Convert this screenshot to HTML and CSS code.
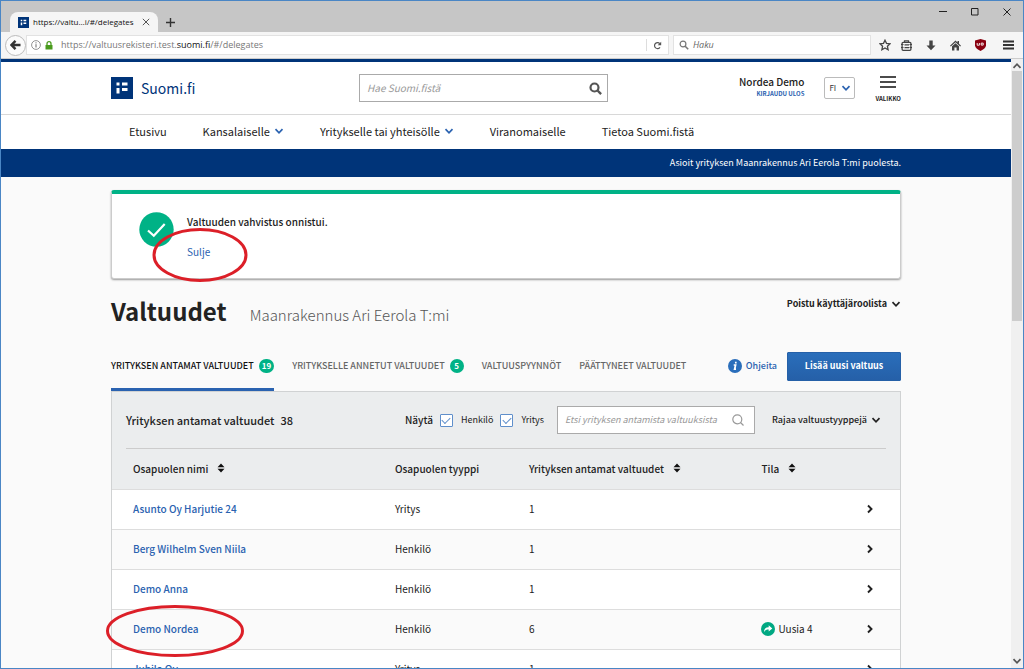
FILE: index.html
```html
<!DOCTYPE html>
<html lang="fi">
<head>
<meta charset="utf-8">
<title>Valtuudet - Suomi.fi</title>
<link rel="stylesheet" href="styles.css">
</head>
<body>
<svg class="defs" aria-hidden="true">
  <symbol id="flag" viewBox="0 0 22 22"><path fill="#003479" d="M0 0h22v22H0z"/><path fill="#fff" d="M5.500 5.500h3v3h-3zM11 5.500h5.500v3H11zM5.500 11h3v5.500h-3zM11 11h5.500v3H11z"/></symbol>
  <symbol id="down" viewBox="0 0 10 10"><path d="M1.500 3.200 5 6.800l3.500-3.600" fill="none" stroke="currentColor" stroke-width="1.700"/></symbol>
  <symbol id="right" viewBox="0 0 10 10"><path d="M3 1.500 6.500 5 3 8.500" fill="none" stroke="currentColor" stroke-width="1.900"/></symbol>
  <symbol id="sort" viewBox="0 0 8 10"><path d="M.5 4.300 4 .5l3.500 3.800zM.5 5.700h7L4 9.500z" fill="#111"/></symbol>
</svg>
<div class="window">
  <div class="titlebar">
    <div class="tab">
      <svg class="favicon"><use href="#flag"/></svg>
      <span>https://valtu…i/#/delegates</span>
      <button class="plain" aria-label="Sulje välilehti"><svg width="8" height="8" viewBox="0 0 8 8"><path d="M.8.8l6.400 6.400M7.200.8.8 7.200" stroke="#555" fill="none"/></svg></button>
    </div>
    <button class="plain new-tab" aria-label="Uusi välilehti"><svg width="9" height="9" viewBox="0 0 9 9"><path d="M4.500 0v9M0 4.500h9" stroke="#333" stroke-width="1.400"/></svg></button>
    <div class="win-buttons">
      <button class="plain" aria-label="Pienennä"><svg width="8" height="8" viewBox="0 0 8 8"><path d="M0 3.500h8" stroke="#222"/></svg></button>
      <button class="plain" aria-label="Suurenna"><svg width="8" height="8" viewBox="0 0 8 8"><path d="M.5.5h6.500v6.500H.5z" stroke="#222" fill="none"/></svg></button>
      <button class="plain" aria-label="Sulje"><svg width="8" height="8" viewBox="0 0 8 8"><path d="M.5.5l7 7M7.500.5l-7 7" stroke="#222"/></svg></button>
    </div>
  </div>
  <div class="toolbar">
    <button class="plain back" aria-label="Takaisin"><svg width="11" height="10" viewBox="0 0 11 10"><path d="M5.500.8 1.500 5l4 4.200M2 5h8.500" stroke="#333" stroke-width="2.400" fill="none"/></svg></button>
    <div class="address">
      <svg width="10" height="10" viewBox="0 0 10 10"><circle cx="5" cy="5" r="4.400" fill="none" stroke="#777" stroke-width=".8"/><path d="M5 4.200v3.300M5 2.300v1.100" stroke="#666"/></svg>
      <svg width="8" height="9" viewBox="0 0 8 9"><path d="M2 4.500V2.700a2 2 0 0 1 4 0v1.800" fill="none" stroke="#4a9b1d" stroke-width="1.300"/><path d="M.5 4h7v4.500h-7z" fill="#4a9b1d"/></svg>
      <span class="url">https://valtuusrekisteri.test.<b>suomi.fi</b>/#/delegates</span>
      <button class="plain reload" aria-label="Päivitä"><svg width="9" height="9" viewBox="0 0 9 9"><path d="M7 6.300A3 3 0 1 1 6.800 2.600" fill="none" stroke="#555" stroke-width="1.200"/><path d="M8.200.8v3.500H4.700z" fill="#555"/></svg></button>
    </div>
    <label class="haku"><svg width="10" height="10" viewBox="0 0 10 10"><circle cx="4" cy="4" r="2.900" fill="none" stroke="#777" stroke-width="1.200"/><path d="m6.200 6.200 3 3" stroke="#777" stroke-width="1.600"/></svg><input type="text" placeholder="Haku" aria-label="Haku"></label>
    <div class="tools">
      <button class="plain" aria-label="Kirjanmerkki"><svg width="12" height="12" viewBox="0 0 12 12"><path d="m6 1.200 1.500 3.200 3.500.4-2.600 2.400.7 3.500L6 9l-3.100 1.700.7-3.500L1 4.800l3.500-.4z" fill="none" stroke="#444" stroke-width="1.300"/></svg></button>
      <button class="plain clip" aria-label="Kirjanmerkit"><svg width="11" height="11" viewBox="0 0 11 11"><rect x="1.100" y="2.300" width="8.800" height="8" rx="1" fill="none" stroke="#444" stroke-width="1.300"/><path d="M3.500 2.300V.8h4v1.500M0 4.500h2.500M0 7.500h2.500M8.500 4.500H11M8.500 7.500H11M3.500 4.900h4.500M3.500 7.600h4.500" fill="none" stroke="#444" stroke-width="1.200"/></svg></button>
      <button class="plain" aria-label="Lataukset"><svg width="10" height="11" viewBox="0 0 10 11"><path d="M3.300.5h3.400v5H9.500L5 10.300.5 5.500h2.800z" fill="#444"/></svg></button>
      <button class="plain" aria-label="Koti"><svg width="11" height="11" viewBox="0 0 11 11"><path d="M0 5.700 5.500.6l2 1.800V1h1.500v2.800L11 5.700l-.8.8L5.500 2.200.8 6.500z" fill="#444"/><path d="M2 6.300 5.500 3.200 9 6.300V10.500H6.600V7.500H4.400v3H2z" fill="#444"/></svg></button>
      <button class="plain" aria-label="uBlock"><svg width="11" height="12" viewBox="0 0 11 12"><path d="M5.500 0 11 1.500v4.700c0 2.500-2.500 4.300-5.500 5.800C2.500 10.500 0 8.700 0 6.200V1.500z" fill="#8a0010"/><path d="M2.200 4v2.200h2.200V4M6.200 4.100h2v2h-2z" fill="none" stroke="#fff" stroke-width=".9"/></svg></button>
      <button class="plain menu" aria-label="Valikko"><svg width="11" height="10" viewBox="0 0 11 10"><path d="M0 1.500h11M0 5h11M0 8.500h11" stroke="#333" stroke-width="2"/></svg></button>
    </div>
  </div>
  <div class="viewport">
    <main class="page">
      <header class="site-header">
        <div class="container header-row">
          <a class="logo" href="#"><svg><use href="#flag"/></svg>Suomi.fi</a>
          <label class="search"><input type="text" placeholder="Hae Suomi.fistä" aria-label="Hae Suomi.fistä"><svg width="13" height="13" viewBox="0 0 13 13"><circle cx="5.500" cy="5.500" r="4" fill="none" stroke="#555" stroke-width="2.200"/><path d="m8.500 8.500 3.600 3.600" stroke="#555" stroke-width="2.400"/></svg></label>
          <div class="header-right">
            <div class="user"><strong>Nordea Demo</strong><a href="#">KIRJAUDU ULOS</a></div>
            <label class="lang"><select aria-label="Kieli"><option>FI</option></select><svg class="chev"><use href="#down"/></svg></label>
            <button class="plain valikko"><svg width="16" height="12" viewBox="0 0 16 12"><path d="M0 1h16M0 6h16M0 11h16" stroke="#111" stroke-width="1.600"/></svg>VALIKKO</button>
          </div>
        </div>
      </header>
      <nav class="main-nav">
        <div class="container nav-row">
          <a href="#">Etusivu</a>
          <button class="plain">Kansalaiselle<svg class="chev"><use href="#down"/></svg></button>
          <button class="plain">Yritykselle tai yhteisölle<svg class="chev"><use href="#down"/></svg></button>
          <a href="#">Viranomaiselle</a>
          <a href="#">Tietoa Suomi.fistä</a>
        </div>
      </nav>
      <div class="role-bar"><div class="container">Asioit yrityksen Maanrakennus Ari Eerola T:mi puolesta.</div></div>
      <div class="container">
        <section class="alert">
          <svg width="35" height="35" viewBox="0 0 35 35"><circle cx="17.500" cy="17.500" r="17.200" fill="#00b286"/><path d="m9 18.500 5.800 5.300L25.700 12" fill="none" stroke="#fff" stroke-width="2.200"/></svg>
          <div class="alert-text"><strong>Valtuuden vahvistus onnistui.</strong><a href="#">Sulje</a></div>
          <svg class="ring ring-close" viewBox="0 0 96 54"><ellipse cx="48" cy="27" rx="46" ry="25.500"/></svg>
        </section>
        <div class="heading">
          <h1>Valtuudet</h1><p>Maanrakennus Ari Eerola T:mi</p>
          <button class="plain small-menu">Poistu käyttäjäroolista<svg class="chev"><use href="#down"/></svg></button>
        </div>
        <div class="tabs">
          <a class="active" href="#">YRITYKSEN ANTAMAT VALTUUDET<span class="badge">19</span></a>
          <a href="#">YRITYKSELLE ANNETUT VALTUUDET<span class="badge">5</span></a>
          <a href="#">VALTUUSPYYNNÖT</a>
          <a href="#">PÄÄTTYNEET VALTUUDET</a>
          <div class="actions">
            <a class="help" href="#"><svg width="14" height="14" viewBox="0 0 14 14"><circle cx="7" cy="7" r="7" fill="#2a6ebb"/><path d="M7.800 2.700v1.800M5.700 6h1.900l-1 4.200h1.400" fill="none" stroke="#fff" stroke-width="1.700"/></svg>Ohjeita</a>
            <button class="primary">Lisää uusi valtuus</button>
          </div>
        </div>
        <section class="panel">
          <div class="filters">
            <h2>Yrityksen antamat valtuudet<span>38</span></h2>
            <div class="checks">
              <strong>Näytä</strong>
              <label><input type="checkbox" checked>Henkilö</label>
              <label><input type="checkbox" checked>Yritys</label>
            </div>
            <label class="search filter-search"><input type="text" placeholder="Etsi yrityksen antamista valtuuksista" aria-label="Etsi yrityksen antamista valtuuksista"><svg width="12" height="12" viewBox="0 0 12 12"><circle cx="5.300" cy="5.300" r="4.500" fill="none" stroke="#999" stroke-width="1.200"/><path d="m8.500 8.500 3 3" stroke="#999" stroke-width="1.200"/></svg></label>
            <button class="plain small-menu">Rajaa valtuustyyppejä<svg class="chev"><use href="#down"/></svg></button>
          </div>
          <table>
            <colgroup><col class="c-name"><col class="c-type"><col class="c-count"><col class="c-state"><col></colgroup>
            <thead><tr><th>Osapuolen nimi<svg class="sort"><use href="#sort"/></svg></th><th>Osapuolen tyyppi</th><th>Yrityksen antamat valtuudet<svg class="sort"><use href="#sort"/></svg></th><th>Tila<svg class="sort"><use href="#sort"/></svg></th><th></th></tr></thead>
            <tbody>
              <tr><td><a href="#">Asunto Oy Harjutie 24</a></td><td>Yritys</td><td>1</td><td></td><td><svg class="arrow"><use href="#right"/></svg></td></tr>
              <tr><td><a href="#">Berg Wilhelm Sven Niila</a></td><td>Henkilö</td><td>1</td><td></td><td><svg class="arrow"><use href="#right"/></svg></td></tr>
              <tr><td><a href="#">Demo Anna</a></td><td>Henkilö</td><td>1</td><td></td><td><svg class="arrow"><use href="#right"/></svg></td></tr>
              <tr><td class="marked"><a href="#">Demo Nordea</a><svg class="ring ring-row" viewBox="0 0 140 54"><ellipse cx="70" cy="27" rx="67.500" ry="24.500"/></svg></td><td>Henkilö</td><td>6</td><td><span class="state"><svg width="14" height="14" viewBox="0 0 14 14"><circle cx="7" cy="7" r="7" fill="#00a882"/><path d="M3 10.200c0-3.400 1.600-5 4.700-5V3.300L11.300 6.400 7.700 9.400V7.500C5.500 7.500 4.200 8 3 10.200z" fill="#fff"/></svg>Uusia 4</span></td><td><svg class="arrow"><use href="#right"/></svg></td></tr>
              <tr><td><a href="#">Jubila Oy</a></td><td>Yritys</td><td>1</td><td></td><td><svg class="arrow"><use href="#right"/></svg></td></tr>
            </tbody>
          </table>
        </section>
      </div>
    </main>
    <div class="scrollbar"><svg class="chev"><use href="#down"/></svg><div class="thumb"></div><svg class="chev"><use href="#down"/></svg></div>
  </div>
</div>
</body>
</html>
```
FILE: styles.css
```css
* { box-sizing: border-box; }
body {
  margin: 0;
  color: #222;
  font: 11px/16px "Noto Sans CJK JP", "Noto Sans", sans-serif;
}
a { color: #2a62b0; text-decoration: none; }
svg { display: block; flex: none; }
.defs { position: absolute; width: 0; height: 0; }
input, select, button { font: inherit; color: inherit; }
.plain {
  display: flex;
  align-items: center;
  justify-content: center;
  padding: 0;
  border: 0;
  background: none;
}
.chev { width: 10px; height: 10px; }

.window {
  display: flex;
  flex-direction: column;
  height: 100vh;
  overflow: hidden;
  border: 1px solid #4a86c5;
}

/* Browser chrome */
.titlebar {
  display: flex;
  flex: none;
  align-items: flex-end;
  height: 31px;
  background: #c6c6c6;
  font: 8px/12px "Open Sans", sans-serif;
}
.tab {
  display: flex;
  align-items: center;
  gap: 4px;
  height: 20px;
  margin-left: 9px;
  padding: 0 8px;
  border-radius: 8px 8px 0 0;
  background: #f5f5f5;
  color: #111;
}
.tab .plain { margin-left: 4px; }
.favicon { width: 11px; height: 11px; }
.new-tab { height: 20px; margin-left: 8px; }
.win-buttons {
  display: flex;
  align-self: flex-start;
  gap: 24px;
  margin-left: auto;
  padding: 7px 12px 0 0;
}
.toolbar {
  display: flex;
  flex: none;
  align-items: center;
  height: 27px;
  padding: 0 9px 0 4px;
  border-bottom: 1px solid #ccc;
  background: #f5f5f5;
  font: 10px/14px "Open Sans", sans-serif;
}
.back {
  width: 21px;
  height: 21px;
  border: 1px solid #bbb;
  border-radius: 50%;
  background: #fbfbfb;
}
.address, .haku {
  display: flex;
  align-items: center;
  height: 20px;
  border: 1px solid #e2e2e2;
  background: #fff;
}
.address { flex: 1; gap: 4px; padding-left: 4px; }
.url { margin-left: 4px; color: #777; font-size: 9px; }
.url b { color: #111; font-weight: 400; }
.reload { width: 22px; height: 12px; margin-left: auto; border-left: 1px solid #ddd; }
.haku { width: 198px; gap: 4px; margin-left: 4px; padding-left: 5px; }
.haku input { width: 100%; padding: 0; border: 0; outline: 0; background: none; font-size: 9px; }
.haku input::placeholder { color: #666; font-style: italic; }
.tools { display: flex; align-items: center; gap: 14px; margin-left: 8px; }
.clip { margin-left: -4px; }
.menu { margin-left: 3px; }

.viewport { display: flex; flex: 1; min-height: 0; }
.page {
  flex: 1;
  min-width: 0;
  overflow: hidden;
  border-top: 3px solid #003479;
  background: #fafafa;
}
.scrollbar {
  display: flex;
  flex-direction: column;
  align-items: center;
  width: 12px;
  padding: 2px 0;
  background: #f0f0f0;
  color: #555;
}
.scrollbar .chev:first-child { transform: rotate(180deg); }
.scrollbar .chev:last-child { margin-top: auto; }
.thumb { width: 10px; height: 250px; background: #cdcdcd; }

.container { width: calc(100% - 40px); max-width: 790px; margin: 0 auto; }

/* Header */
.site-header { border-bottom: 1px solid #d8d8d8; background: #fff; }
.header-row {
  display: grid;
  grid-template-columns: 248px 249px 1fr;
  align-items: center;
  height: 52px;
}
.logo { display: flex; align-items: center; gap: 8px; color: #003479; font-size: 14px; }
.logo svg { width: 22px; height: 22px; }
.search {
  display: flex;
  align-items: center;
  height: 28px;
  padding: 0 5px 0 7px;
  border: 1px solid #aaa;
  background: #fff;
}
.search input { flex: 1; min-width: 0; padding: 0; border: 0; outline: 0; background: none; font-size: 10px; }
.search input::placeholder { color: #999; font-style: italic; }
.header-right { display: flex; align-items: center; justify-content: flex-end; }
.user { display: flex; flex-direction: column; align-items: flex-end; line-height: 12px; }
.user a { font-size: 6px; font-weight: 700; }
.user strong { font-size: 10px; font-weight: 500; }
.lang {
  display: flex;
  align-items: center;
  width: 31px;
  height: 22px;
  margin: 0 20px;
  padding-left: 4px;
  border: 1px solid #bbb;
  border-radius: 2px;
  color: #2a62b0;
}
.lang select {
  width: 12px;
  padding: 0;
  border: 0;
  outline: 0;
  background: none;
  color: #333;
  font-size: 8px;
  appearance: none;
}
.valikko { flex-direction: column; gap: 6px; padding-top: 3px; font-size: 6px; font-weight: 700; line-height: 10px; }

.main-nav { background: #fff; }
.nav-row { display: flex; align-items: center; gap: 36px; height: 34px; padding: 0 0 2px 18px; font-size: 11px; }
.nav-row a { color: #222; }
.nav-row .plain { gap: 4px; }
.nav-row .chev { color: #2a62b0; }
.role-bar {
  padding: 6px 0;
  background: #003479;
  color: #fff;
  font-size: 9px;
  text-align: right;
}

/* Confirmation */
.alert {
  position: relative;
  display: flex;
  gap: 13px;
  height: 89px;
  margin-top: 13px;
  padding: 18px 27px;
  border: 1px solid #ccc;
  border-top: 4px solid #00b286;
  border-radius: 3px;
  background: #fff;
  box-shadow: 0 1px 2px #999;
}
.alert-text { display: flex; flex-direction: column; gap: 14px; padding-top: 2px; font-size: 10px; }
.alert-text strong { font-weight: 500; }
.ring { position: absolute; fill: none; stroke: #dc1f28; stroke-width: 3px; }
.ring-close { top: 34px; left: 40px; width: 96px; height: 54px; }

.heading { display: flex; align-items: flex-start; margin-top: 14px; }
h1 { margin: 0; font-size: 24px; font-weight: 700; line-height: 35px; }
.heading p { margin: 10px 0 0 23px; color: #555; font-size: 15px; font-weight: 300; line-height: 24px; }
.small-menu { gap: 4px; font-size: 9px; font-weight: 700; }
.heading .small-menu { margin: 3px 0 0 auto; }

.tabs { display: flex; align-items: stretch; gap: 18px; height: 50px; margin-top: 13px; }
.tabs > a {
  display: flex;
  align-items: center;
  gap: 5px;
  padding-top: 2px;
  border-bottom: 3px solid transparent;
  color: #666;
  font-size: 9px;
  font-weight: 500;
  white-space: nowrap;
}
.tabs > .active { border-color: #2a62b0; color: #111; }
.badge {
  min-width: 14px;
  padding: 0 3px;
  border-radius: 7px;
  background: #00b286;
  color: #fff;
  font-size: 8px;
  font-weight: 700;
  line-height: 14px;
  text-align: center;
}
.actions { display: flex; align-items: center; gap: 10px; margin-left: auto; }
.help { display: flex; align-items: center; gap: 4px; font-size: 9px; font-weight: 500; }
.primary {
  width: 114px;
  height: 29px;
  padding: 0;
  border: 1px solid #2560a8;
  border-radius: 1px;
  background: linear-gradient(#2a6ebb, #2560a8);
  color: #fff;
  font-size: 9px;
  font-weight: 700;
}

/* Table */
.panel { border: 1px solid #d0d2d3; background: #ebedee; }
.filters {
  display: flex;
  align-items: center;
  height: 57px;
  margin: 0 14px;
  border-bottom: 1px solid #ccc;
}
h2 { margin: 0; font-size: 11px; font-weight: 500; }
h2 span { margin-left: 6px; }
.checks { display: flex; align-items: center; gap: 7px; margin-left: auto; font-size: 9px; }
.checks strong { font-size: 10px; font-weight: 500; }
.checks label { display: flex; align-items: center; gap: 8px; }
.checks input {
  display: flex;
  align-items: center;
  justify-content: center;
  width: 13px;
  height: 13px;
  margin: 0;
  border: 1px solid #5f8fcb;
  border-radius: 1px;
  background: #fff;
  appearance: none;
}
.checks input:checked::before {
  width: 7px;
  height: 4px;
  margin-bottom: 2px;
  border: solid #5f8fcb;
  border-width: 0 0 1px 1px;
  content: "";
  transform: rotate(-45deg);
}
.filter-search { width: 198px; margin: 0 17px 0 13px; padding-right: 10px; }
.filter-search input { font-size: 9px; }
.filters .small-menu { margin-right: 5px; font-weight: 500; }
table { width: 100%; border-collapse: collapse; table-layout: fixed; }
.c-name { width: 33.25%; }
.c-type { width: 17%; }
.c-count { width: 29.5%; }
.c-state { width: 12.5%; }
th, td { height: 40px; padding: 0 0 0 21px; font-size: 10px; text-align: left; white-space: nowrap; }
th { font-weight: 500; }
td { border-top: 1px solid #ddd; }
td:last-child { padding-left: 26px; }
td a { font-weight: 500; }
tbody tr { background: #fff; }
tbody tr:nth-child(even) { background: #fafafa; }
.sort { display: inline-block; width: 8px; height: 10px; margin-left: 9px; }
.arrow { width: 10px; height: 10px; }
.state { display: flex; align-items: center; gap: 3px; }
.marked { position: relative; }
.ring-row { top: -6px; left: -7px; width: 140px; height: 54px; }
```
